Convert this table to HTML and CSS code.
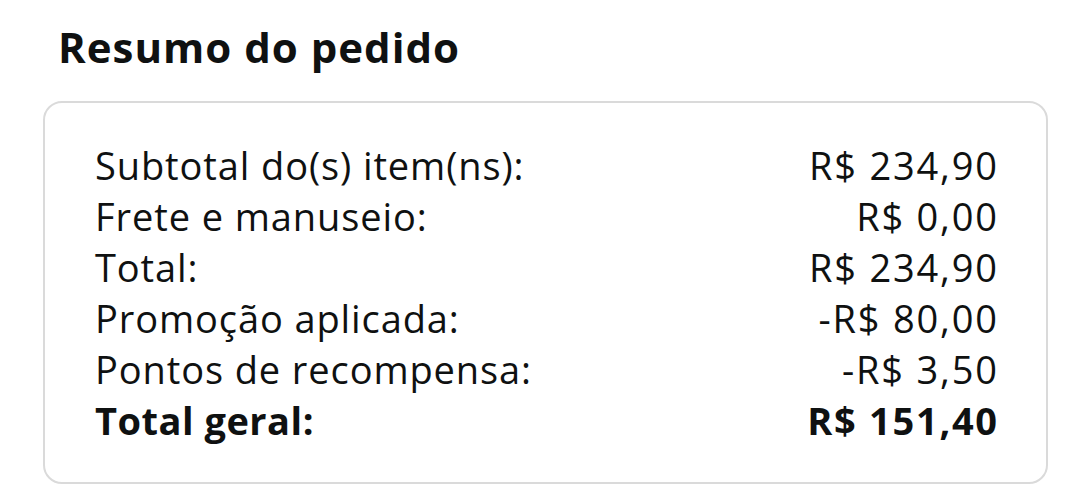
FILE: index.html
```html
<!DOCTYPE html>
<html lang="pt-BR">
<head>
<meta charset="utf-8">
<link rel="stylesheet" href="styles.css">
</head>
<body>
<h1 class="title">Resumo do pedido</h1>
<div class="card">
  <div class="row"><span class="label">Subtotal do(s) item(ns):</span><span class="value">R$ 234,90</span></div>
  <div class="row"><span class="label">Frete e manuseio:</span><span class="value">R$ 0,00</span></div>
  <div class="row"><span class="label">Total:</span><span class="value">R$ 234,90</span></div>
  <div class="row"><span class="label">Promoção aplicada:</span><span class="value">-R$ 80,00</span></div>
  <div class="row"><span class="label">Pontos de recompensa:</span><span class="value">-R$ 3,50</span></div>
  <div class="row total"><span class="label">Total geral:</span><span class="value">R$ 151,40</span></div>
</div>
</body>
</html>
```

FILE: styles.css
```css
html, body {
  margin: 0;
  padding: 0;
  background: #ffffff;
}
body {
  font-family: "Open Sans", "Noto Sans", sans-serif;
  color: #0f1111;
  padding: 22px 44px 0 43px;
}
.title {
  margin: 0 0 29px 15px;
  font-size: 42px;
  line-height: 50px;
  font-weight: 700;
  letter-spacing: 1px;
}
.card {
  width: 1005px;
  box-sizing: border-box;
  border: 2px solid #dadada;
  border-radius: 19px;
  padding: 37px 49px 36px 50px;
}
.row {
  display: flex;
  justify-content: space-between;
  font-size: 38px;
  line-height: 51px;
}
.label {
  letter-spacing: 0.9px;
}
.value {
  letter-spacing: 1.8px;
  margin-right: -1.8px;
}
.row.total {
  font-weight: 700;
}
.row.total .label {
  letter-spacing: 0.5px;
}
.row.total .value {
  letter-spacing: 1.7px;
}
```
